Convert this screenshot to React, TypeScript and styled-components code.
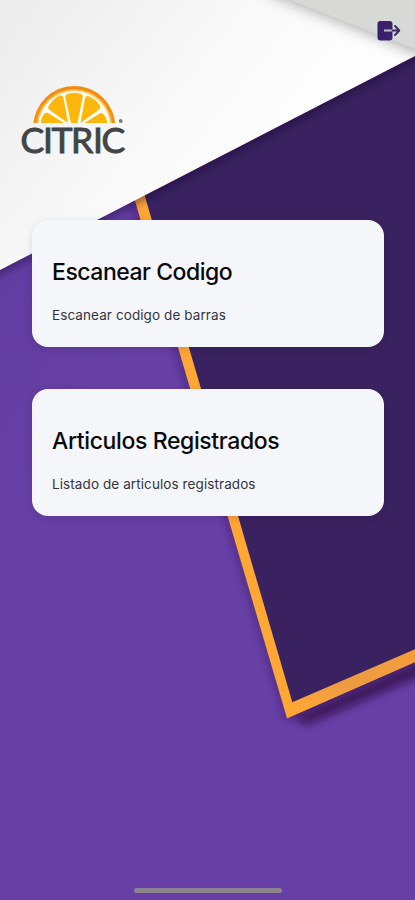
import React from 'react';
import styled, { createGlobalStyle } from 'styled-components';

const GlobalStyle = createGlobalStyle`
  * { box-sizing: border-box; }
  body { margin: 0; font-family: Inter, "Liberation Sans", sans-serif; }
`;

const Screen = styled.main`
  position: relative;
  isolation: isolate;
  display: flex;
  flex-direction: column;
  width: 415px;
  height: 900px;
  overflow: hidden;
  background: #653fa4;
`;

const Backdrop = styled.svg`
  position: absolute;
  inset: 0;
  z-index: -1;
`;

const TopBar = styled.header`
  display: flex;
  justify-content: flex-end;
  height: 86px;
  padding: 18px 13px 0 0;
`;

const IconButton = styled.button`
  display: block;
  width: 26px;
  height: 26px;
  padding: 0;
  border: 0;
  background: none;
`;

const Brand = styled.div`
  height: 134px;
  padding-left: 18px;
`;

const CardList = styled.section`
  display: flex;
  flex-direction: column;
  gap: 42px;
  padding: 0 31px 0 32px;
`;

const Card = styled.article`
  height: 127px;
  padding: 38px 20px 0;
  border-radius: 16px;
  background: #f4f6fa;
  box-shadow: 0 2px 9px rgba(25, 10, 55, 0.14);
`;

const Title = styled.h2<{ $tracking: number }>`
  margin: 0;
  font-size: 23px;
  font-weight: 500;
  line-height: 28px;
  letter-spacing: ${({ $tracking }) => $tracking}px;
  white-space: nowrap;
  color: #090a0c;
`;

const Description = styled.p`
  margin: 20px 0 0;
  font-size: 13.5px;
  line-height: 18px;
  letter-spacing: 0.09px;
  white-space: nowrap;
  color: #34353a;
`;

const Footer = styled.footer`
  display: flex;
  justify-content: center;
  margin-top: auto;
  padding-bottom: 7px;
`;

const HomeIndicator = styled.div`
  width: 148px;
  height: 5px;
  border-radius: 3px;
  background: #8c8590;
`;

function Background() {
  return (
    <Backdrop width="415" height="900" viewBox="0 0 415 900" aria-hidden="true">
      <defs>
        <linearGradient id="paper" x1="0" y1="0" x2="240" y2="190" gradientUnits="userSpaceOnUse">
          <stop stopColor="#ebebeb" />
          <stop offset=".55" stopColor="#f7f7f7" />
          <stop offset="1" stopColor="#fdfdfd" />
        </linearGradient>
        <linearGradient id="base" gradientTransform="rotate(55)">
          <stop offset=".2" stopColor="#613ca0" />
          <stop offset=".5" stopColor="#6640a5" />
        </linearGradient>
        <linearGradient id="lower-edge" x1="290" y1="710" x2="415" y2="655" gradientUnits="userSpaceOnUse">
          <stop stopColor="#ffa735" />
          <stop offset=".45" stopColor="#ed9c43" />
          <stop offset="1" stopColor="#f39c3b" />
        </linearGradient>
        <filter id="soft" x="-30%" y="-30%" width="160%" height="160%">
          <feGaussianBlur stdDeviation="7" />
        </filter>
        <filter id="fine" x="-30%" y="-30%" width="160%" height="160%">
          <feGaussianBlur stdDeviation="4" />
        </filter>
        <clipPath id="sheet"><path d="M0 0H415V56L0 270Z" /></clipPath>
      </defs>
      <path fill="url(#base)" d="M0 0H415V900H0Z" />
      <path d="M134 198L288 716L430 655" fill="none" stroke="#35104f" strokeWidth="7" opacity=".45" filter="url(#fine)" />
      <path d="M294 717L430 657V672L306 725Z" fill="#300747" opacity=".8" filter="url(#fine)" />
      <path d="M123 160L287 718.3L425 657.5V40Z" fill="#ffa735" />
      <path d="M292.3 702.3L425 645V657.5L287 718.3Z" fill="url(#lower-edge)" />
      <path d="M130 145L292.3 702.3L425 645V40Z" fill="#39225f" />
      <path d="M-20 280L435 46" stroke="#18062f" strokeWidth="6" opacity=".62" filter="url(#fine)" />
      <path fill="url(#paper)" d="M0 0H415V56L0 270Z" />
      <g clipPath="url(#sheet)">
        <path d="M265 -8L425 56V20L290 -25Z" fill="#777" opacity=".6" filter="url(#soft)" />
        <path d="M290 0L415 49V0Z" fill="#d8d8d7" />
      </g>
    </Backdrop>
  );
}

function CitricLogo() {
  return (
    <svg width="112" height="84" viewBox="0 0 112 84" role="img" aria-label="Citric">
      <defs>
        <linearGradient id="rind" x2="0" y2="1">
          <stop stopColor="#f58a0b" />
          <stop offset="1" stopColor="#f39b20" />
        </linearGradient>
        <clipPath id="half"><path d="M12 0H100V37H12Z" /></clipPath>
      </defs>
      <g clipPath="url(#half)">
        <circle cx="56.3" cy="41" r="41" fill="url(#rind)" />
        <circle cx="56.3" cy="41" r="37.8" fill="#ffc65b" />
        <circle cx="56.3" cy="41" r="36" fill="#fffdf2" />
        <g fill="#fdb60c">
          <path d="M53 37L47.5 12Q46.5 8 51 7.5Q56.5 6 62 7.5Q65.5 8 64.5 12L59.5 37Z" />
          <path d="M50 37L31 23.5Q29 21.5 32 18Q36 12 41.5 9.5Q44.5 8.5 45.5 12Z" />
          <path d="M62.5 37L67 12.5Q68 9 71.5 10.5Q77 13 81 18Q83.5 21 81 23.5Z" />
          <path d="M23 37Q23 30 27.5 27Q29 26 31.5 28L46 37Z" />
          <path d="M66.5 37L81 28Q84 26 85.5 28.5Q89 32 89 37Z" />
        </g>
      </g>
      <circle cx="102.7" cy="35" r="1.9" fill="#77797a" />
      <text x="2.4 25 33.6 53.1 74.9 83.4" y="66.8" fill="#424445" stroke="#424445" strokeWidth="1" fontFamily="Lato, sans-serif" fontSize="35.5">CITRIC</text>
    </svg>
  );
}

function LogoutIcon() {
  return (
    <svg width="26" height="26" viewBox="0 0 26 26" fill="none" aria-hidden="true">
      <rect x="1.5" y="3" width="15" height="19.5" rx="3" fill="#3b206c" />
      <path d="M8 12.5H17" stroke="#c6bdd1" strokeWidth="2" />
      <path d="M16.5 12.5H23M19 8L23.3 12.5L19 17" stroke="#3b285c" strokeWidth="1.9" strokeLinecap="round" strokeLinejoin="round" />
    </svg>
  );
}

export default function App() {
  return (
    <>
      <GlobalStyle />
      <Screen>
        <Background />
        <TopBar>
          <IconButton aria-label="Cerrar sesión"><LogoutIcon /></IconButton>
        </TopBar>
        <Brand><CitricLogo /></Brand>
        <CardList>
          <Card>
            <Title $tracking={-0.48}>Escanear Codigo</Title>
            <Description>Escanear codigo de barras</Description>
          </Card>
          <Card>
            <Title $tracking={-0.38}>Articulos Registrados</Title>
            <Description>Listado de articulos registrados</Description>
          </Card>
        </CardList>
        <Footer><HomeIndicator /></Footer>
      </Screen>
    </>
  );
}
